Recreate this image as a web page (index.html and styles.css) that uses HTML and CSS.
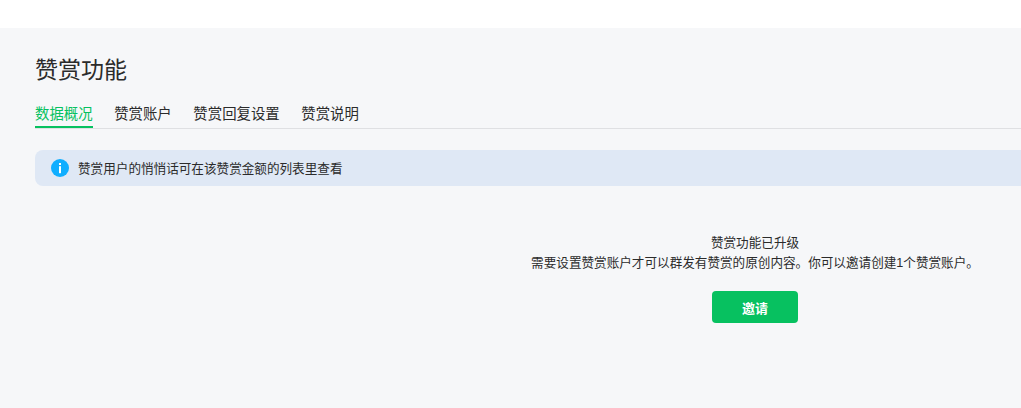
FILE: index.html
```html
<!DOCTYPE html>
<html lang="zh-CN">
<head>
    <meta charset="UTF-8">
    <meta name="viewport" content="width=device-width, initial-scale=1.0">
    <title>赞赏功能</title>
    <link rel="stylesheet" href="styles.css">
</head>
<body>
    <div class="topbar"></div>
    <main class="page">
        <h1 class="page-title">赞赏功能</h1>
        <nav class="tabs">
            <a class="tab active">数据概况</a>
            <a class="tab">赞赏账户</a>
            <a class="tab">赞赏回复设置</a>
            <a class="tab">赞赏说明</a>
        </nav>
        <div class="notice">
            <svg class="notice-icon" viewBox="0 0 18 18" width="18" height="18">
                <circle cx="9" cy="9" r="9" fill="#10aeff"/>
                <rect x="8" y="4" width="2" height="2" fill="#fff"/>
                <rect x="8" y="7.2" width="2" height="7" fill="#fff"/>
            </svg>
            <span class="notice-text">赞赏用户的悄悄话可在该赞赏金额的列表里查看</span>
        </div>
        <section class="empty">
            <p>赞赏功能已升级</p>
            <p>需要设置赞赏账户才可以群发有赞赏的原创内容。你可以邀请创建1个赞赏账户。</p>
            <button class="btn-invite" type="button">邀请</button>
        </section>
    </main>
</body>
</html>
```

FILE: styles.css
```css
html, body {
    height: 100%;
}
body {
    margin: 0;
    overflow: hidden;
    background-color: #f6f7f9;
    color: #2b2b2b;
    font-family: "Liberation Sans", "Noto Sans CJK SC", sans-serif;
    font-size: 12.6px;
}
.topbar {
    height: 28px;
    background: white;
}
.page {
    width: 1440px;
    margin-left: 35px;
}
.page-title {
    margin: 0;
    padding-top: 26px;
    font-size: 23.04px;
    font-weight: normal;
    line-height: 33px;
}
.tabs {
    display: flex;
    gap: 21.6px;
    margin-top: 12px;
    border-bottom: 1px solid #dfe0e3;
    height: 29px;
    font-size: 14.4px;
}
.tab {
    height: 29px;
    line-height: 30px;
    box-sizing: border-box;
}
.tab.active {
    color: #07c160;
    border-bottom: 2px solid #07c160;
}
.notice {
    display: flex;
    align-items: center;
    gap: 9px;
    height: 36px;
    margin-top: 21px;
    padding-left: 16px;
    background-color: #dfe8f5;
    border-radius: 8px;
}
.notice-icon {
    flex: none;
}
.notice-text {
    padding-bottom: 2px;
}
.empty {
    margin-top: 47px;
    text-align: center;
}
.empty p {
    margin: 0;
    line-height: 20px;
}
.btn-invite {
    display: block;
    width: 86px;
    height: 32px;
    margin: 18px auto 0;
    padding: 0;
    border: none;
    border-radius: 4px;
    background-color: #07c160;
    color: white;
    font-family: inherit;
    font-size: 13px;
    font-weight: bold;
}
```
